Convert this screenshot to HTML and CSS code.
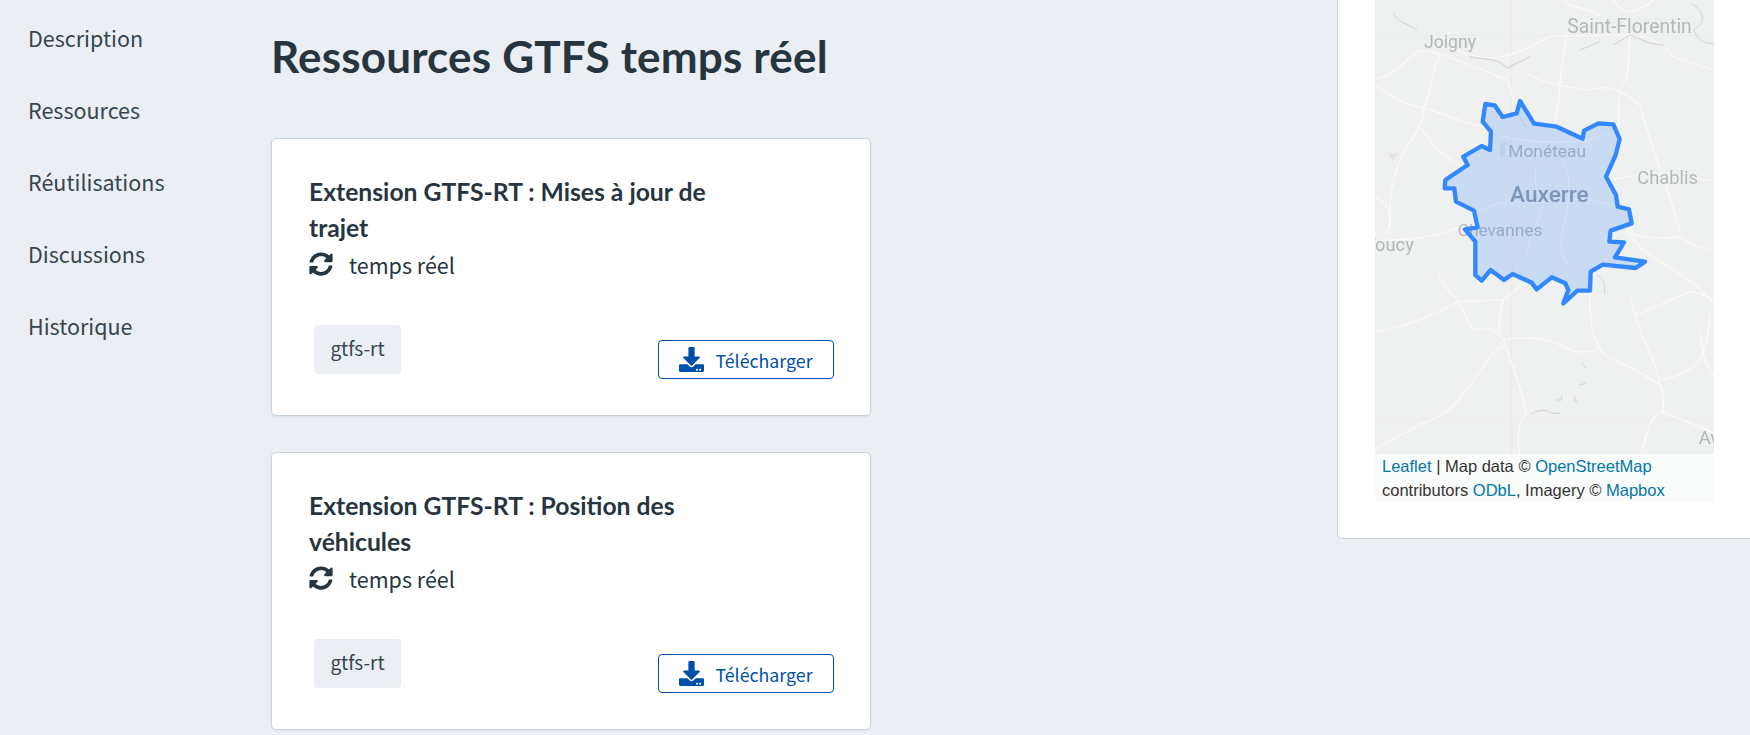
FILE: index.html
```html
<!DOCTYPE html>
<html lang="fr">
<head>
<meta charset="utf-8">
<title>Ressources GTFS temps réel</title>
<link rel="stylesheet" href="styles.css">
</head>
<body>
<div class="page">
  <nav class="side">
    <a href="#">Description</a>
    <a href="#">Ressources</a>
    <a href="#">Réutilisations</a>
    <a href="#">Discussions</a>
    <a href="#">Historique</a>
  </nav>
  <main class="main">
    <h2 class="heading">Ressources GTFS temps réel</h2>
    <article class="card">
      <h4 class="card-title">Extension GTFS-RT : Mises à jour de trajet</h4>
      <div class="kind">
        <svg class="sync" viewBox="0 0 512 512"><path d="M370.72 133.28C339.458 104.008 298.888 87.962 255.848 88c-77.458.068-144.328 53.178-162.791 126.85-1.344 5.363-6.122 9.15-11.651 9.15H24.103c-7.498 0-13.194-6.807-11.807-14.176C33.933 94.924 134.813 8 256 8c66.448 0 126.791 26.136 171.315 68.685L463.03 40.97C478.149 25.851 504 36.559 504 57.941V192c0 13.255-10.745 24-24 24H345.941c-21.382 0-32.09-25.851-16.971-40.971l41.75-41.749zM32 296h134.059c21.382 0 32.09 25.851 16.971 40.971l-41.75 41.75c31.262 29.273 71.835 45.319 114.876 45.28 77.418-.07 144.315-53.144 162.787-126.849 1.344-5.363 6.122-9.15 11.651-9.15h57.304c7.498 0 13.194 6.807 11.807 14.176C478.067 417.076 377.187 504 256 504c-66.448 0-126.791-26.136-171.315-68.685L48.97 471.03C33.851 486.149 8 475.441 8 454.059V320c0-13.255 10.745-24 24-24z"/></svg>
        <span>temps réel</span>
      </div>
      <div class="card-foot">
        <span class="tag">gtfs-rt</span>
        <a class="btn" href="#">
          <svg class="dl" viewBox="0 0 512 512"><path d="M216 0h80c13.3 0 24 10.7 24 24v168h87.7c17.8 0 26.7 21.5 14.1 34.1L269.7 378.3c-7.5 7.5-19.8 7.5-27.3 0L90.1 226.1c-12.6-12.6-3.7-34.1 14.1-34.1H192V24c0-13.3 10.7-24 24-24zm296 376v112c0 13.3-10.7 24-24 24H24c-13.3 0-24-10.7-24-24V376c0-13.3 10.7-24 24-24h146.7l49 49c20.1 20.1 52.5 20.1 72.6 0l49-49H488c13.3 0 24 10.7 24 24zm-124 88c0-11-9-20-20-20s-20 9-20 20 9 20 20 20 20-9 20-20zm64 0c0-11-9-20-20-20s-20 9-20 20 9 20 20 20 20-9 20-20z"/></svg>
          <span>Télécharger</span>
        </a>
      </div>
    </article>
    <article class="card">
      <h4 class="card-title">Extension GTFS-RT : Position des véhicules</h4>
      <div class="kind">
        <svg class="sync" viewBox="0 0 512 512"><path d="M370.72 133.28C339.458 104.008 298.888 87.962 255.848 88c-77.458.068-144.328 53.178-162.791 126.85-1.344 5.363-6.122 9.15-11.651 9.15H24.103c-7.498 0-13.194-6.807-11.807-14.176C33.933 94.924 134.813 8 256 8c66.448 0 126.791 26.136 171.315 68.685L463.03 40.97C478.149 25.851 504 36.559 504 57.941V192c0 13.255-10.745 24-24 24H345.941c-21.382 0-32.09-25.851-16.971-40.971l41.75-41.749zM32 296h134.059c21.382 0 32.09 25.851 16.971 40.971l-41.75 41.75c31.262 29.273 71.835 45.319 114.876 45.28 77.418-.07 144.315-53.144 162.787-126.849 1.344-5.363 6.122-9.15 11.651-9.15h57.304c7.498 0 13.194 6.807 11.807 14.176C478.067 417.076 377.187 504 256 504c-66.448 0-126.791-26.136-171.315-68.685L48.97 471.03C33.851 486.149 8 475.441 8 454.059V320c0-13.255 10.745-24 24-24z"/></svg>
        <span>temps réel</span>
      </div>
      <div class="card-foot">
        <span class="tag">gtfs-rt</span>
        <a class="btn" href="#">
          <svg class="dl" viewBox="0 0 512 512"><path d="M216 0h80c13.3 0 24 10.7 24 24v168h87.7c17.8 0 26.7 21.5 14.1 34.1L269.7 378.3c-7.5 7.5-19.8 7.5-27.3 0L90.1 226.1c-12.6-12.6-3.7-34.1 14.1-34.1H192V24c0-13.3 10.7-24 24-24zm296 376v112c0 13.3-10.7 24-24 24H24c-13.3 0-24-10.7-24-24V376c0-13.3 10.7-24 24-24h146.7l49 49c20.1 20.1 52.5 20.1 72.6 0l49-49H488c13.3 0 24 10.7 24 24zm-124 88c0-11-9-20-20-20s-20 9-20 20 9 20 20 20 20-9 20-20zm64 0c0-11-9-20-20-20s-20 9-20 20 9 20 20 20 20-9 20-20z"/></svg>
          <span>Télécharger</span>
        </a>
      </div>
    </article>
  </main>
  <aside class="aside">
    <div class="map">
      <svg class="tiles" viewBox="135 0 1017 1506" preserveAspectRatio="none">
        <g class="grid">
          <path d="M545 0V1506M135 105H1152M135 1258H1152"/>
        </g>
        <g class="roads">
          <path d="M135 237C200 230 240 160 275 150C330 155 460 210 530 240C545 260 540 290 560 310"/>
          <path d="M135 258C170 270 180 300 280 325C340 335 390 370 460 380"/>
          <path d="M330 165C300 220 310 260 280 325C280 370 260 400 230 440C210 480 190 520 180 600C180 640 190 680 160 705"/>
          <path d="M380 150C470 190 540 180 660 108L900 105C960 105 1000 130 1030 170C1080 190 1120 200 1152 210"/>
          <path d="M710 100C690 200 690 300 675 375"/>
          <path d="M900 105C890 170 905 220 880 250C860 280 870 330 865 400"/>
          <path d="M580 210C600 240 700 260 770 270C820 260 850 250 930 315C950 390 970 460 1000 530C1020 600 1040 650 1050 700"/>
          <path d="M840 540C900 530 950 510 1000 525C1060 535 1100 540 1152 540"/>
          <path d="M135 590C170 610 185 625 180 700"/>
          <path d="M150 720C200 720 300 720 390 680"/>
          <path d="M275 385C300 430 350 480 400 500"/>
          <path d="M900 700C920 710 1000 720 1050 710C1090 740 1120 750 1152 750"/>
          <path d="M890 690C920 750 1000 790 1030 810C1100 850 1120 880 1152 910"/>
          <path d="M700 0C720 30 790 20 810 50M850 0C870 30 900 60 970 0"/>
          <path d="M135 995C220 985 300 950 385 905C410 950 420 990 440 990C480 980 500 990 520 1020C550 1110 570 1150 590 1240C560 1270 560 1320 570 1370"/>
          <path d="M385 905L520 900C540 880 560 870 580 850"/>
          <path d="M320 810C340 870 370 880 385 905"/>
          <path d="M510 1000C505 950 510 930 520 900"/>
          <path d="M520 1020C570 1010 650 1010 700 1040C740 1060 780 1060 810 1045C820 1080 900 1090 990 1155C1005 1190 1000 1210 1000 1235C1060 1265 1100 1270 1152 1300"/>
          <path d="M520 1040C470 1060 470 1100 400 1180C370 1230 310 1260 280 1270C240 1290 180 1320 135 1350"/>
          <path d="M780 880C780 950 780 1000 810 1045"/>
          <path d="M900 890C920 960 930 1000 960 1060C980 1100 985 1130 990 1155"/>
          <path d="M910 945C960 940 1000 900 1090 875C1110 880 1130 890 1152 900"/>
          <path d="M1140 940C1135 1000 1130 1040 1110 1080C1080 1120 1030 1130 990 1140"/>
          <path d="M1110 1000C1120 1080 1130 1100 1152 1130"/>
          <path d="M985 1240C960 1260 950 1300 935 1350M1000 1235C960 1240 950 1300 940 1350"/>
          <path d="M620 500C610 540 620 600 640 610C620 680 600 700 590 760M700 480C730 540 710 620 710 640C690 720 680 760 720 800"/>
          <path d="M440 640C500 600 560 600 620 610C680 590 760 590 860 620M520 410C600 430 760 440 845 395"/>
        </g>
        <g class="water">
          <path d="M190 40C200 65 240 75 260 90M420 170C470 180 510 175 530 205L600 170M750 150L810 125M850 135L900 105L960 130L1000 135M1085 10C1130 40 1125 70 1090 90C1110 130 1130 130 1150 130M570 350C580 370 580 380 590 378M800 825C830 840 820 860 825 880M755 1090L770 1105M750 1155L765 1150M680 1200H695V1190M735 1190V1205H742M605 1242C630 1225 650 1230 665 1240H688"/>
          <path class="lake" d="M172 458L204 462L188 482ZM510 430L526 426L524 470L510 472Z"/>
        </g>
        <g class="labels">
          <text class="lb lb-j" x="282" y="145">Joigny</text>
          <text class="lb lb-l" x="712" y="98">Saint-Florentin</text>
          <text class="lb lb-s" x="535" y="471">Monéteau</text>
          <text class="lb-big" x="540" y="605">Auxerre</text>
          <text class="lb" x="922" y="552">Chablis</text>
          <text class="lb lb-s" x="383" y="708">Chevannes</text>
          <text class="lb" x="105" y="752">Toucy</text>
          <text class="lb" x="1106" y="1333">Av</text>
        </g>
        <path class="zone" d="M466 312L494 316L518 351L560 340L570 303L612 371L680 380L758 416L762 392L805 370L850 373L869 417L857 465L828 530L858 585L863 620L897 628L905 670L842 692L838 725L882 727L855 772L945 785L917 804L818 794L782 815L780 872L742 872L700 910L715 870L706 850L665 832L620 868L605 848L548 822L522 840L482 810L455 842L436 825L436 725L405 688L443 682L432 632L378 605L373 565L344 565L346 540L413 495L400 470L455 438L480 450L483 395L458 365Z"/>
      </svg>
      <div class="attribution"><a href="#">Leaflet</a> | Map data © <a href="#">OpenStreetMap</a> contributors <a href="#">ODbL</a>, Imagery © <a href="#">Mapbox</a></div>
    </div>
  </aside>
</div>
</body>
</html>
```
FILE: styles.css
```css
* { box-sizing: border-box; }
html, body { margin: 0; height: 735px; overflow: hidden; }
body {
  background: #ebeff3;
  color: #26353f;
  font-family: "Noto Sans CJK SC", "Noto Sans", sans-serif;
  font-size: 20px;
}
a { text-decoration: none; }
.page { display: flex; align-items: flex-start; height: 735px; }
.side {
  width: 271px;
  flex: none;
  padding: 20px 0 0 28px;
  display: flex;
  flex-direction: column;
  gap: 36px;
}
.side a { color: #36454f; font-size: 21.5px; line-height: 36px; }
.main { width: 600px; flex: none; padding-top: 29px; }
.heading {
  margin: 0 0 55px;
  font-family: Lato, sans-serif;
  font-size: 44px;
  line-height: 54px;
  font-weight: 700;
  letter-spacing: .18px;
}
.card {
  height: 278px;
  margin-bottom: 36px;
  padding: 35px 36px 0 37px;
  background: #fff;
  border: 1px solid #c9d3df;
  border-radius: 5px;
  box-shadow: 0 1px 2px rgba(38, 53, 63, .08);
}
.card-title {
  width: 440px;
  margin: 0;
  font-family: Lato, sans-serif;
  font-size: 24.7px;
  line-height: 36px;
  font-weight: 700;
}
.kind { display: flex; align-items: center; gap: 16px; height: 36px; font-size: 21.5px; }
.sync { width: 24px; height: 24px; fill: #26353f; }
.card-foot { display: flex; align-items: flex-end; justify-content: space-between; margin-top: 43px; padding-left: 5px; }
.tag {
  width: 87px;
  height: 49px;
  background: #ebeff3;
  border-radius: 4px;
  font-size: 19px;
  line-height: 45px;
  text-align: center;
  color: #36454f;
}
.btn {
  display: flex;
  align-items: center;
  justify-content: center;
  gap: 11px;
  width: 176px;
  height: 39px;
  border: 1px solid #0050aa;
  border-radius: 4px;
  color: #0050aa;
  font-size: 17.8px;
  margin-bottom: -5px;
}
.dl { width: 25px; height: 25px; fill: #0050aa; }
.aside {
  flex: none;
  width: 413px;
  margin-left: 466px;
  height: 539px;
  padding: 0 36px 36px 37px;
  background: #fff;
  border: 1px solid #c9d3df;
  border-width: 0 0 1px 1px;
  border-radius: 0 0 0 5px;
}
.map { position: relative; width: 339px; height: 502px; background: #eff0f0; overflow: hidden; }
.tiles { display: block; width: 339px; height: 502px; }
.grid path { fill: none; stroke: #e8e9ea; stroke-width: 2; }
.roads path { fill: none; stroke: #fcfcfc; stroke-width: 3.5; opacity: .85; filter: blur(.7px); }
.water path { fill: none; stroke: #d0d2d3; stroke-width: 3; stroke-linecap: round; }
.water .lake { fill: #e2e4e5; stroke: none; filter: blur(.6px); }
.lb { font-family: Roboto, sans-serif; font-size: 55px; fill: #b4b7b9; filter: blur(.4px); }
.lb-s { font-size: 52px; }
.lb-j { font-size: 53px; }
.lb-l { font-size: 58px; }
.lb-big { font-family: Roboto, sans-serif; font-size: 68px; font-weight: 500; fill: #8f9aa6; filter: blur(.4px); }
.zone { fill: #3388ff; fill-opacity: .2; stroke: #3388ff; stroke-width: 13; stroke-linejoin: round; }
.attribution {
  position: absolute;
  left: 0;
  right: 0;
  bottom: 0;
  height: 48px;
  padding: 0 7px;
  background: rgba(255, 255, 255, .7);
  color: #333;
  font-family: "Liberation Sans", Arial, sans-serif;
  font-size: 16.5px;
  line-height: 24px;
}
.attribution a { color: #0078a8; }
```
